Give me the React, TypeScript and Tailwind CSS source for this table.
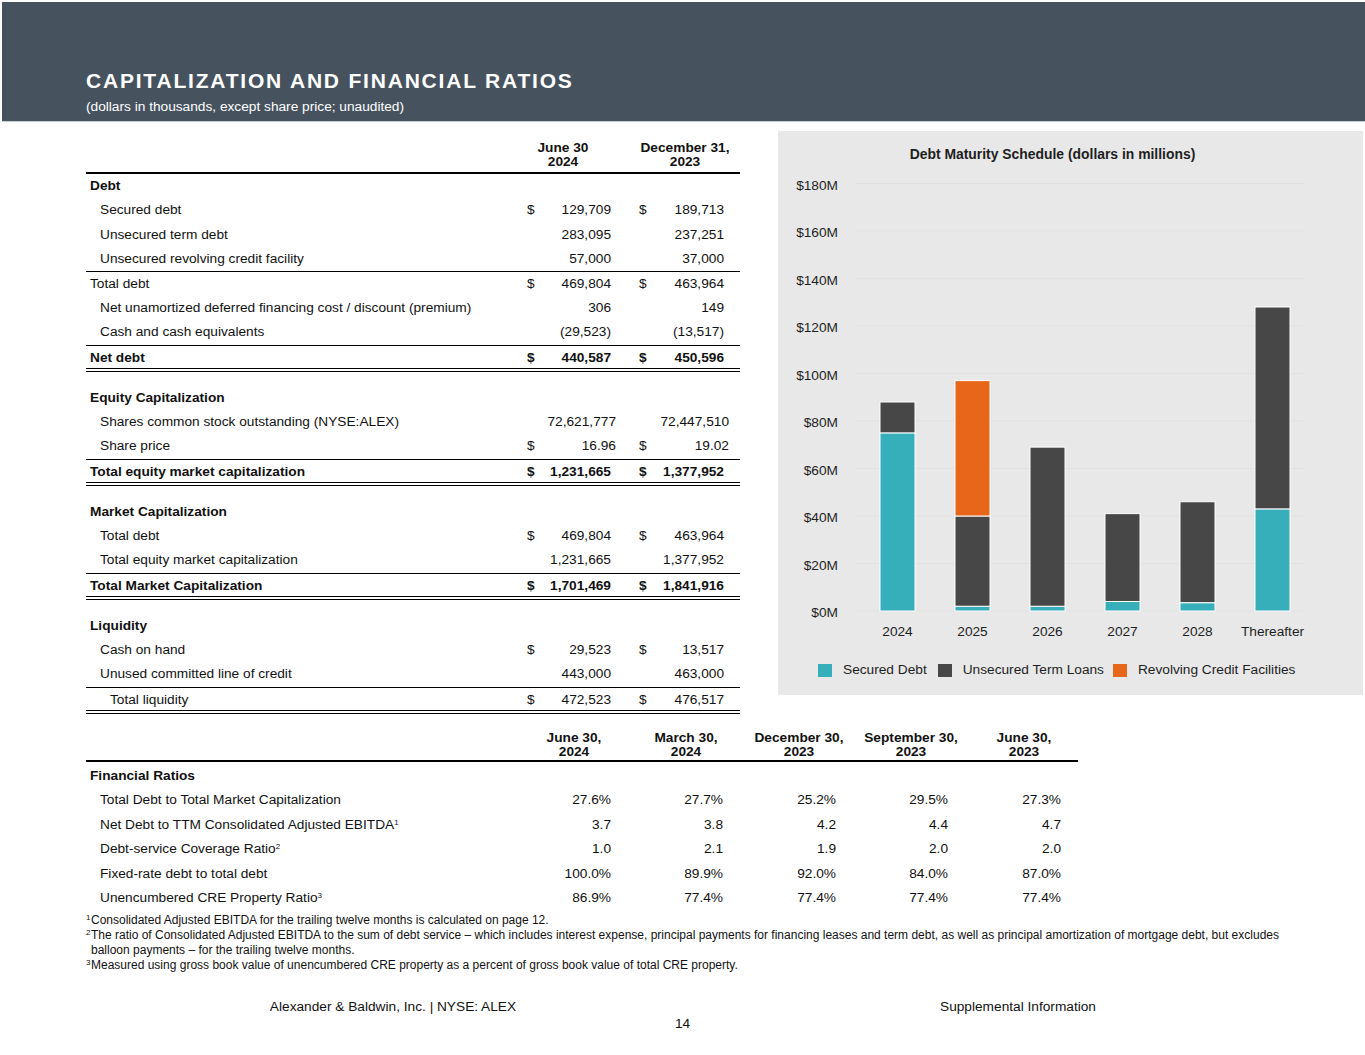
import React from "react";

type Row =
  | { kind: "spacer" }
  | {
      kind: "row";
      label: string;
      indent: 0 | 1 | 2;
      bold?: boolean;
      v1?: string;
      v2?: string;
      d?: boolean;
      border?: "single" | "double";
      shift?: boolean;
    };

const topRows: Row[] = [
  { kind: "row", label: "Debt", indent: 0, bold: true },
  { kind: "row", label: "Secured debt", indent: 1, v1: "129,709", v2: "189,713", d: true },
  { kind: "row", label: "Unsecured term debt", indent: 1, v1: "283,095", v2: "237,251" },
  { kind: "row", label: "Unsecured revolving credit facility", indent: 1, v1: "57,000", v2: "37,000", border: "single" },
  { kind: "row", label: "Total debt", indent: 0, v1: "469,804", v2: "463,964", d: true },
  { kind: "row", label: "Net unamortized deferred financing cost / discount (premium)", indent: 1, v1: "306", v2: "149" },
  { kind: "row", label: "Cash and cash equivalents", indent: 1, v1: "(29,523)", v2: "(13,517)", border: "single" },
  { kind: "row", label: "Net debt", indent: 0, bold: true, v1: "440,587", v2: "450,596", d: true, border: "double" },
  { kind: "spacer" },
  { kind: "row", label: "Equity Capitalization", indent: 0, bold: true },
  { kind: "row", label: "Shares common stock outstanding (NYSE:ALEX)", indent: 1, v1: "72,621,777", v2: "72,447,510", shift: true },
  { kind: "row", label: "Share price", indent: 1, v1: "16.96", v2: "19.02", d: true, shift: true, border: "single" },
  { kind: "row", label: "Total equity market capitalization", indent: 0, bold: true, v1: "1,231,665", v2: "1,377,952", d: true, border: "double" },
  { kind: "spacer" },
  { kind: "row", label: "Market Capitalization", indent: 0, bold: true },
  { kind: "row", label: "Total debt", indent: 1, v1: "469,804", v2: "463,964", d: true },
  { kind: "row", label: "Total equity market capitalization", indent: 1, v1: "1,231,665", v2: "1,377,952", border: "single" },
  { kind: "row", label: "Total Market Capitalization", indent: 0, bold: true, v1: "1,701,469", v2: "1,841,916", d: true, border: "double" },
  { kind: "spacer" },
  { kind: "row", label: "Liquidity", indent: 0, bold: true },
  { kind: "row", label: "Cash on hand", indent: 1, v1: "29,523", v2: "13,517", d: true },
  { kind: "row", label: "Unused committed line of credit", indent: 1, v1: "443,000", v2: "463,000", border: "single" },
  { kind: "row", label: "Total liquidity", indent: 2, v1: "472,523", v2: "476,517", d: true, border: "double" },
];

const ratioRows: { label: string; sup?: string; vals: string[] }[] = [
  { label: "Total Debt to Total Market Capitalization", vals: ["27.6%", "27.7%", "25.2%", "29.5%", "27.3%"] },
  { label: "Net Debt to TTM Consolidated Adjusted EBITDA", sup: "1", vals: ["3.7", "3.8", "4.2", "4.4", "4.7"] },
  { label: "Debt-service Coverage Ratio", sup: "2", vals: ["1.0", "2.1", "1.9", "2.0", "2.0"] },
  { label: "Fixed-rate debt to total debt", vals: ["100.0%", "89.9%", "92.0%", "84.0%", "87.0%"] },
  { label: "Unencumbered CRE Property Ratio", sup: "3", vals: ["86.9%", "77.4%", "77.4%", "77.4%", "77.4%"] },
];

const ratioHeads: [string, string][] = [
  ["June 30,", "2024"],
  ["March 30,", "2024"],
  ["December 30,", "2023"],
  ["September 30,", "2023"],
  ["June 30,", "2023"],
];

function ValueCell({ v, d, w, shift }: { v?: string; d?: boolean; w: string; shift?: boolean }) {
  return (
    <div className={`${w} flex justify-between pl-[2px]`}>
      <span>{d ? "$" : ""}</span>
      <span className={shift ? "-mr-[5px]" : ""}>{v ?? ""}</span>
    </div>
  );
}

function TopTable() {
  return (
    <div className="w-[654px] mt-[19px] text-[13.7px] text-[#111]">
      <div className="flex items-end border-b-2 border-black pb-[3px] font-bold leading-[14px]">
        <div className="flex-1" />
        <div className="w-[100px] text-center">
          June 30
          <br />
          2024
        </div>
        <div className="w-[17px]" />
        <div className="w-[110px] text-center">
          December 31,
          <br />
          2023
        </div>
      </div>
      {topRows.map((r, i) => {
        if (r.kind === "spacer") return <div key={i} className="h-[14px]" />;
        const pl = r.indent === 0 ? "pl-[4px]" : r.indent === 1 ? "pl-[14px]" : "pl-[24px]";
        const border =
          r.border === "single"
            ? "h-[24.5px] border-b border-black"
            : r.border === "double"
            ? "h-[26.5px] pt-[3px] border-b-4 border-double border-black"
            : "h-[24.5px]";
        return (
          <div key={i} className={`flex items-center ${border} ${r.bold ? "font-bold" : ""}`}>
            <div className={`flex-1 ${pl} whitespace-nowrap`}>{r.label}</div>
            <ValueCell v={r.v1} d={r.d} w="w-[86px]" shift={r.shift} />
            <div className="w-[26px]" />
            <ValueCell v={r.v2} d={r.d} w="w-[87px]" shift={r.shift} />
            <div className="w-[16px]" />
          </div>
        );
      })}
    </div>
  );
}

function RatioTable() {
  const cells = (render: (j: number) => React.ReactNode, cls: string) => (
    <>
      {[0, 1, 2, 3, 4].map((j) => (
        <React.Fragment key={j}>
          {j > 0 && <div className={j % 2 === 0 ? "w-[39px]" : "w-[38px]"} />}
          <div className={`w-[74px] ${cls}`}>{render(j)}</div>
        </React.Fragment>
      ))}
      <div className="w-[17px]" />
    </>
  );
  return (
    <div className="w-[992px] ml-[86px] mt-[17px] text-[13.7px] text-[#111]">
      <div className="flex items-end border-b-2 border-black pb-[1px] font-bold leading-[14px]">
        <div className="flex-1" />
        {cells(
          (j) => (
            <>
              <div className="whitespace-nowrap">{ratioHeads[j][0]}</div>
              <div>{ratioHeads[j][1]}</div>
            </>
          ),
          "text-center flex flex-col items-center"
        )}
      </div>
      <div className="pt-[2px]">
        <div className="h-[24.5px] flex items-center pl-[4px] font-bold">Financial Ratios</div>
        {ratioRows.map((r, i) => (
          <div key={i} className="h-[24.5px] flex items-center">
            <div className="flex-1 pl-[14px] whitespace-nowrap">
              {r.label}
              {r.sup && <sup className="text-[8px]">{r.sup}</sup>}
            </div>
            {cells((j) => r.vals[j], "text-right")}
          </div>
        ))}
      </div>
    </div>
  );
}

const bars = [
  { label: "2024", s: 75, u: 13, r: 0 },
  { label: "2025", s: 2, u: 38, r: 57 },
  { label: "2026", s: 2, u: 67, r: 0 },
  { label: "2027", s: 4, u: 37, r: 0 },
  { label: "2028", s: 3.5, u: 42.5, r: 0 },
  { label: "Thereafter", s: 43, u: 85, r: 0 },
];

const TEAL = "#36afbb";
const DARK = "#474747";
const ORANGE = "#e8661a";
const FONT = "Liberation Sans, Arial, sans-serif";

function Chart() {
  const k = 2.375;
  const base = 451;
  const y = (v: number) => base - v * k;
  const ticks = [0, 20, 40, 60, 80, 100, 120, 140, 160, 180];
  return (
    <div className="w-[585px] h-[564px] mt-[9px] ml-[38px] bg-[#e8e8e8] text-[#1e1e1e]">
      <div className="h-[29px] pt-[15px] pr-[36px] text-center text-[13.9px] font-bold leading-[16px] whitespace-nowrap">
        Debt Maturity Schedule (dollars in millions)
      </div>
      <svg width="585" height="484" viewBox="0 0 585 484" className="block">
        {ticks.map((t) => (
          <g key={t}>
            <line x1="77" x2="527" y1={y(t)} y2={y(t)} stroke="#e1e1e1" strokeWidth="1" />
            <text
              x="60"
              y={y(t) + 1.5}
              textAnchor="end"
              dominantBaseline="central"
              fontSize="13.7"
              fill="#1e1e1e"
              fontFamily={FONT}
            >
              ${t}M
            </text>
          </g>
        ))}
        {bars.map((b, i) => {
          const x = 102 + i * 75;
          const segs = [
            { v0: 0, v1: b.s, c: TEAL },
            { v0: b.s, v1: b.s + b.u, c: DARK },
            { v0: b.s + b.u, v1: b.s + b.u + b.r, c: ORANGE },
          ].filter((s) => s.v1 > s.v0);
          return (
            <g key={b.label}>
              {segs.map((s, j) => (
                <rect
                  key={j}
                  x={x}
                  y={y(s.v1)}
                  width="35"
                  height={(s.v1 - s.v0) * k}
                  fill={s.c}
                  stroke="#ffffff"
                  strokeWidth="1"
                />
              ))}
              <text
                x={x + 17.5}
                y="471"
                textAnchor="middle"
                dominantBaseline="central"
                fontSize="13.7"
                fill="#1e1e1e"
                fontFamily={FONT}
              >
                {b.label}
              </text>
            </g>
          );
        })}
      </svg>
      <div className="flex items-center pl-[40px] mt-[18px] text-[13.7px] leading-[16px] whitespace-nowrap">
        <span className="w-[14px] h-[13px] bg-[#36afbb]" />
        <span className="ml-[11px]">Secured Debt</span>
        <span className="ml-[11px] w-[14px] h-[13px] bg-[#474747]" />
        <span className="ml-[11px]">Unsecured Term Loans</span>
        <span className="ml-[9px] w-[14px] h-[13px] bg-[#e8661a]" />
        <span className="ml-[11px]">Revolving Credit Facilities</span>
      </div>
    </div>
  );
}

function Footnote({ n, children }: { n: string; children: React.ReactNode }) {
  return (
    <div className="flex">
      <span className="w-[5px] text-[8px] leading-[9px]">{n}</span>
      <span>{children}</span>
    </div>
  );
}

export default function App() {
  return (
    <div className="w-[1365px] h-[1055px] bg-white overflow-hidden font-['Liberation_Sans',Arial,sans-serif] text-[#111]">
      <div className="pt-[2px] pl-[2px]">
        <div className="h-[120px] bg-[#46535f] pl-[84px] pt-[67px] text-white border-b border-[#c9ccd0]">
          <div className="text-[21px] leading-[24px] font-bold tracking-[1.8px]">
            CAPITALIZATION AND FINANCIAL RATIOS
          </div>
          <div className="mt-[6px] text-[13.7px] leading-[16px]">
            (dollars in thousands, except share price; unaudited)
          </div>
        </div>
      </div>
      <div className="flex items-start">
        <div className="ml-[86px]">
          <TopTable />
        </div>
        <Chart />
      </div>
      <RatioTable />
      <div className="ml-[86px] mt-[2px] w-[1270px] text-[12px] leading-[15px] text-[#111]">
        <Footnote n="1">Consolidated Adjusted EBITDA for the trailing twelve months is calculated on page 12.</Footnote>
        <Footnote n="2">
          <span className="whitespace-nowrap">
            The ratio of Consolidated Adjusted EBITDA to the sum of debt service – which includes interest expense, principal
            payments for financing leases and term debt, as well as principal amortization of mortgage debt, but excludes
          </span>
          <br />
          balloon payments – for the trailing twelve months.
        </Footnote>
        <Footnote n="3">
          Measured using gross book value of unencumbered CRE property as a percent of gross book value of total CRE property.
        </Footnote>
      </div>
      <div className="mt-[26px] text-[13.7px] leading-[16px] text-[#111]">
        <div className="flex">
          <div className="ml-[86px] w-[614px] text-center">Alexander &amp; Baldwin, Inc. | NYSE: ALEX</div>
          <div className="w-[636px] text-center">Supplemental Information</div>
        </div>
        <div className="mt-[1px] text-center">14</div>
      </div>
    </div>
  );
}
